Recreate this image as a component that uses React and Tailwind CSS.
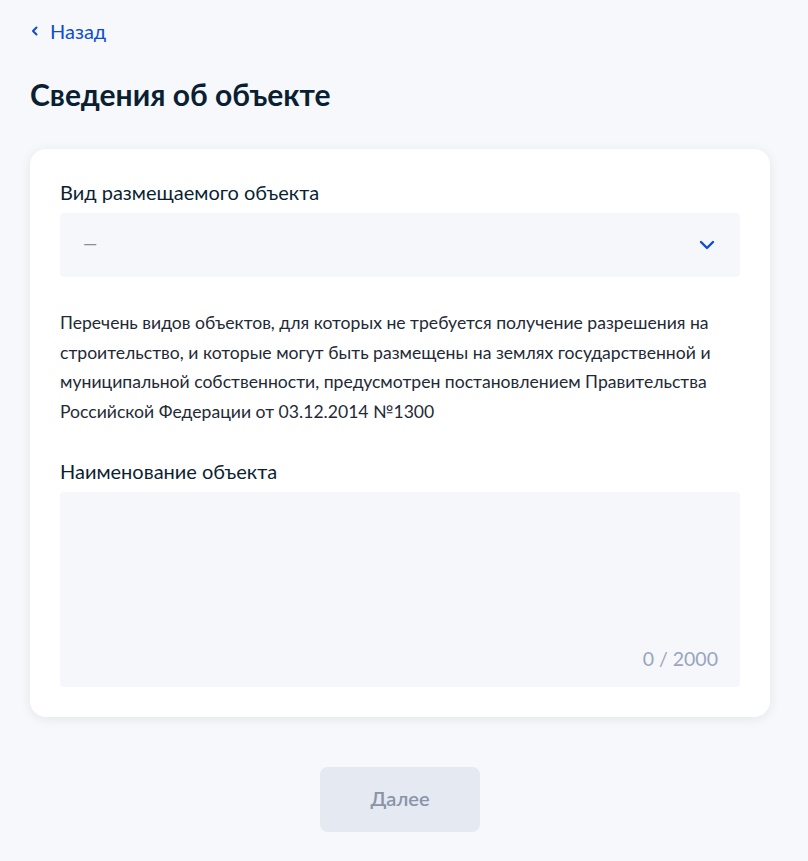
import React from 'react';

export default function App() {
  return (
    <div className="min-h-[861px] w-full bg-[#f6f8fb] font-['Lato','Noto_Sans',sans-serif] text-[#0b1f33]">
      <div className="px-[30px] pt-[19px]">
        <a href="#" className="flex items-center gap-[9px] text-[20px] leading-[24px] text-[#0d4cd3]">
          <svg width="12" height="12" viewBox="0 0 12 12" className="ml-[-1px]">
            <path d="M7.5 2.5 4 6l3.5 3.5" fill="none" stroke="#0d4cd3" strokeWidth="2" strokeLinecap="round" strokeLinejoin="round" />
          </svg>
          <span>Назад</span>
        </a>
        <h1 className="mt-[33px] text-[30px] font-bold leading-[36px]">Сведения об объекте</h1>

        <div className="mt-[37px] w-[740px] rounded-[16px] bg-white px-[30px] pb-[30px] pt-[29px] shadow-[0_2px_12px_rgba(11,31,51,0.08)]">
          <div className="text-[20px] leading-[28px]">Вид размещаемого объекта</div>
          <div className="mt-[7px] flex h-[64px] items-center justify-between rounded-[4px] bg-[#f5f7fa] pl-[23px] pr-[25px]">
            <span className="mb-[4px] text-[18px] text-[#86909c]">—</span>
            <svg width="16" height="10" viewBox="0 0 16 10">
              <path d="M2 2l6 6 6-6" fill="none" stroke="#0d4cd3" strokeWidth="2.4" strokeLinecap="round" strokeLinejoin="round" />
            </svg>
          </div>

          <p className="mt-[31px] text-[17.6px] leading-[29.5px] text-[#1f2a37]">
            Перечень видов объектов, для которых не требуется получение разрешения на строительство, и которые могут быть размещены на землях государственной и муниципальной собственности, предусмотрен постановлением Правительства Российской Федерации от 03.12.2014 №1300
          </p>

          <div className="mt-[31px] text-[20px] leading-[28px]">Наименование объекта</div>
          <div className="mt-[7px] flex h-[195px] items-end justify-end rounded-[4px] bg-[#f5f7fa] px-[22px] pb-[16px]">
            <span className="text-[19.5px] leading-[24px] text-[#9aa5bd]">0 / 2000</span>
          </div>
        </div>

        <div className="mt-[50px] flex w-[740px] justify-center">
          <button className="h-[65px] w-[160px] rounded-[8px] bg-[#e4e9f2] pb-[4px] text-[20px] font-semibold text-[#8a94a8]">
            Далее
          </button>
        </div>
      </div>
    </div>
  );
}
